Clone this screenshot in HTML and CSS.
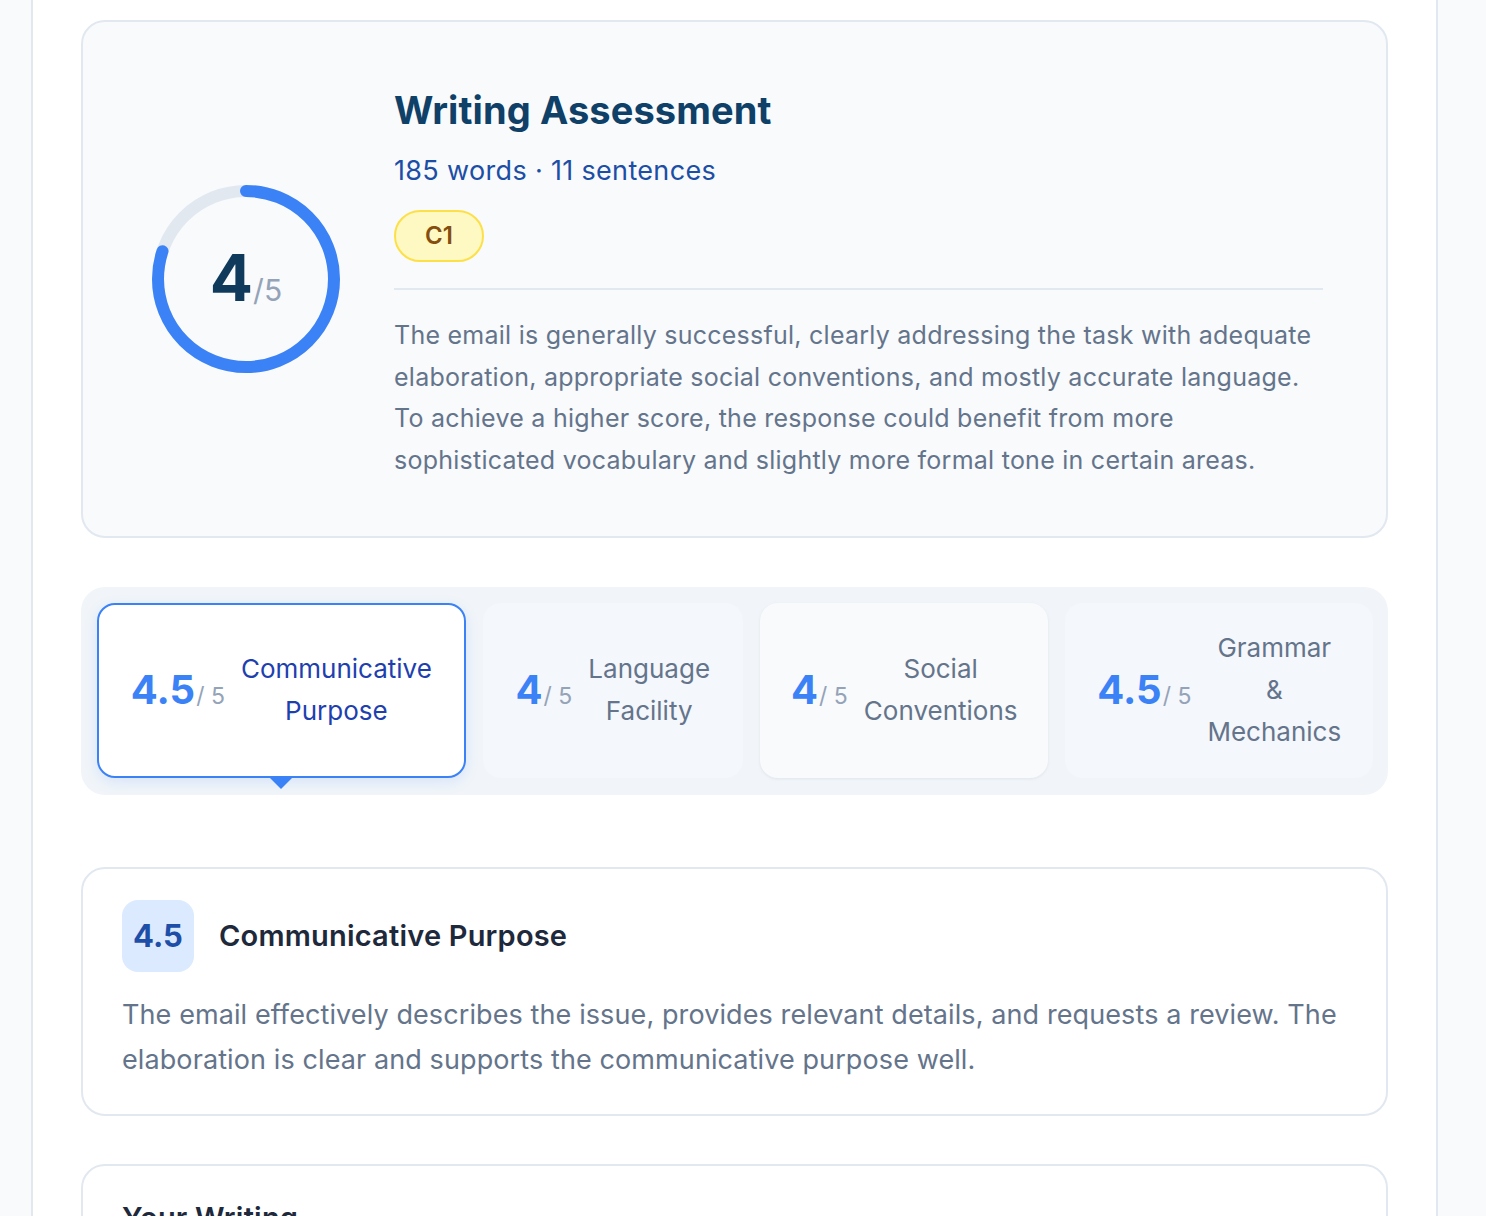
FILE: index.html
```html
<!DOCTYPE html>
<html lang="en">
<head>
<meta charset="utf-8">
<title>Writing Assessment</title>
<link rel="stylesheet" href="styles.css">
</head>
<body>
<div class="panel">
  <section class="summary">
    <div class="ring-col">
      <div class="ring">
        <svg class="ring-svg" width="188" height="188" viewBox="0 0 188 188">
          <circle cx="94" cy="94" r="88" fill="none" stroke="#e2e8f0" stroke-width="12"/>
          <circle cx="94" cy="94" r="88" fill="none" stroke="#3b82f6" stroke-width="12" stroke-linecap="round" stroke-dasharray="442.34 552.92" transform="rotate(-90 94 94)"/>
        </svg>
        <div class="ring-label"><span class="ring-score">4</span><span class="ring-max">/5</span></div>
      </div>
    </div>
    <div class="summary-text">
      <h1 class="title">Writing Assessment</h1>
      <p class="meta">185 words · 11 sentences</p>
      <span class="level">C1</span>
      <hr class="divider">
      <p class="overview">The email is generally successful, clearly addressing the task with adequate elaboration, appropriate social conventions, and mostly accurate language. To achieve a higher score, the response could benefit from more sophisticated vocabulary and slightly more formal tone in certain areas.</p>
    </div>
  </section>

  <nav class="tabs">
    <div class="tab active">
      <div class="tab-score"><span class="num">4.5</span><span class="of">/ 5</span></div>
      <div class="tab-label">Communicative<br>Purpose</div>
    </div>
    <div class="tab">
      <div class="tab-score"><span class="num">4</span><span class="of">/ 5</span></div>
      <div class="tab-label">Language<br>Facility</div>
    </div>
    <div class="tab soft">
      <div class="tab-score"><span class="num">4</span><span class="of">/ 5</span></div>
      <div class="tab-label">Social<br>Conventions</div>
    </div>
    <div class="tab">
      <div class="tab-score"><span class="num">4.5</span><span class="of">/ 5</span></div>
      <div class="tab-label">Grammar<br>&amp;<br>Mechanics</div>
    </div>
  </nav>

  <section class="detail">
    <div class="detail-head">
      <span class="detail-badge">4.5</span>
      <h2 class="detail-title">Communicative Purpose</h2>
    </div>
    <p class="detail-text">The email effectively describes the issue, provides relevant details, and requests a review. The elaboration is clear and supports the communicative purpose well.</p>
  </section>

  <section class="detail writing">
    <h2 class="detail-title">Your Writing</h2>
    <p class="detail-text">Dear Sir or Madam,</p>
  </section>
</div>
</body>
</html>
```

FILE: styles.css
```css
* { box-sizing: border-box; }

html, body {
  margin: 0;
  padding: 0;
  background: #f8fafc;
  font-family: "Inter", "Noto Sans", "Liberation Sans", sans-serif;
}

.panel {
  margin-left: 31px;
  width: 1407px;
  min-height: 1300px;
  background: #ffffff;
  border-left: 2px solid #e2e8f0;
  border-right: 2px solid #e2e8f0;
  padding: 20px 48px 48px 48px;
}

/* summary card */
.summary {
  display: flex;
  align-items: center;
  gap: 45px;
  background: #f8fafc;
  border: 2px solid #e2e8f0;
  border-radius: 24px;
  padding: 66px 63px 54px 60px;
}

.ring-col {
  width: 206px;
  flex: none;
  display: flex;
  justify-content: center;
  padding-bottom: 11px;
}

.ring {
  position: relative;
  width: 188px;
  height: 188px;
}

.ring-svg { display: block; }

.ring-label {
  position: absolute;
  inset: 0;
  display: flex;
  align-items: baseline;
  justify-content: center;
  padding-top: 61px;
}

.ring-score {
  font-size: 64px;
  font-weight: 700;
  color: #0f3a5c;
  line-height: 1;
}

.ring-max {
  font-size: 30px;
  color: #94a3b8;
  line-height: 1;
}

.summary-text { flex: 1; }

.title {
  margin: 0 0 21px 0;
  font-size: 38px;
  line-height: 44px;
  font-weight: 700;
  color: #0f4068;
  letter-spacing: 0.1px;
}

.meta {
  margin: 0 0 21px 0;
  font-size: 27px;
  line-height: 36px;
  color: #1d4ea6;
  letter-spacing: 0.33px;
}

.level {
  display: inline-block;
  height: 52px;
  line-height: 48px;
  padding: 0 29px;
  border-radius: 26px;
  background: #fef9c3;
  border: 2px solid #fde047;
  color: #854d0e;
  font-weight: 600;
  font-size: 24px;
}

.divider {
  border: 0;
  border-top: 2px solid #e2e8f0;
  margin: 26px 0 25px 0;
}

.overview {
  margin: 0;
  font-size: 25px;
  line-height: 41.7px;
  letter-spacing: 0.25px;
  color: #64748b;
}

/* tabs */
.tabs {
  margin-top: 49px;
  display: grid;
  grid-template-columns: 368fr 260fr 288fr 307fr;
  gap: 17px;
  background: #f1f5f9;
  border-radius: 24px;
  padding: 16px 15px 17px 16px;
}

.tab {
  position: relative;
  height: 175px;
  display: flex;
  align-items: center;
  justify-content: center;
  gap: 16px;
  background: #f4f7fb;
  border: 2px solid transparent;
  border-radius: 18px;
  padding: 0 20px;
}

.tab.soft {
  background: #f8fafc;
  box-shadow: 0 1px 3px rgba(148, 163, 184, 0.18);
}

.tab.active {
  background: #ffffff;
  border-color: #3b82f6;
  box-shadow: 0 4px 14px rgba(59, 130, 246, 0.14);
}

.tab.active::after {
  content: "";
  position: absolute;
  left: 50%;
  top: 100%;
  margin-left: -12px;
  margin-top: 1px;
  border-left: 12px solid transparent;
  border-right: 12px solid transparent;
  border-top: 12px solid #3b82f6;
}

.tab-score {
  display: flex;
  align-items: baseline;
  white-space: nowrap;
}

.tab-score .num {
  font-size: 40px;
  font-weight: 700;
  color: #3b82f6;
  line-height: 1;
}

.tab-score .of {
  font-size: 23px;
  color: #94a3b8;
  margin-left: 1px;
  line-height: 1;
}

.tab-label {
  text-align: center;
  font-size: 26px;
  line-height: 42px;
  color: #64748b;
}

.tab.active .tab-label { color: #1e40af; }

/* detail cards */
.detail {
  margin-top: 72px;
  background: #ffffff;
  border: 2px solid #e2e8f0;
  border-radius: 24px;
  padding: 31px 40px 32px 39px;
}

.detail-head {
  display: flex;
  align-items: center;
  gap: 25px;
  margin-bottom: 20px;
}

.detail-badge {
  width: 72px;
  height: 72px;
  border-radius: 16px;
  background: #dbeafe;
  color: #1e4fa8;
  font-size: 31px;
  font-weight: 700;
  display: flex;
  align-items: center;
  justify-content: center;
  flex: none;
}

.detail-title {
  margin: 0;
  font-size: 29px;
  font-weight: 600;
  color: #1e293b;
  letter-spacing: 0.2px;
}

.detail-text {
  margin: 0;
  font-size: 27px;
  line-height: 45px;
  letter-spacing: 0.1px;
  color: #64748b;
}

.writing {
  margin-top: 48px;
  padding-top: 34px;
}

.writing .detail-title { margin-bottom: 16px; }
```
